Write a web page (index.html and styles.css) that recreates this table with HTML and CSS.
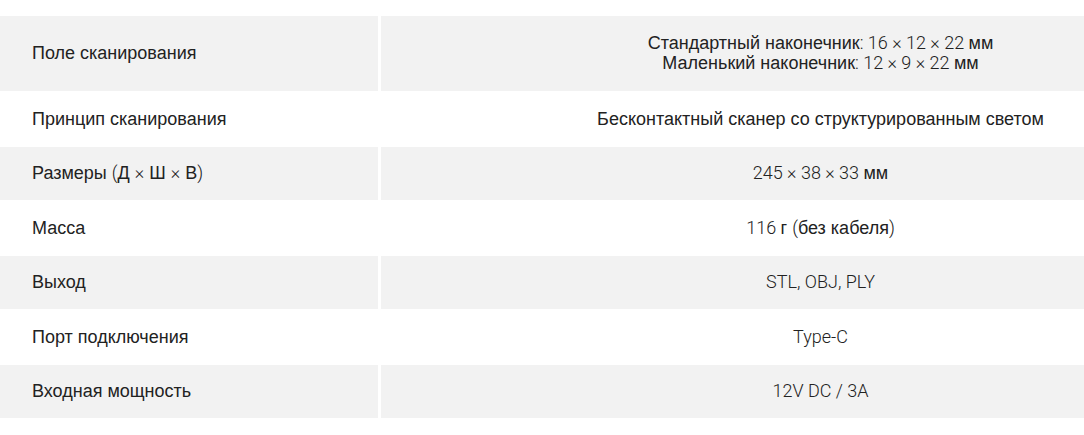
FILE: index.html
```html
<!DOCTYPE html>
<html lang="ru">
<head>
<meta charset="utf-8">
<link rel="stylesheet" href="styles.css">
</head>
<body>
<div class="wrap">
<table class="specs">
  <tr class="odd first">
    <td class="name">Поле сканирования</td>
    <td class="val">Стандартный наконечник<span class="l">: 16 × 12 × 22 </span>мм<br>Маленький наконечник<span class="l">: 12 × 9 × 22 </span>мм</td>
  </tr>
  <tr>
    <td class="name">Принцип сканирования</td>
    <td class="val">Бесконтактный сканер со структурированным светом</td>
  </tr>
  <tr class="odd">
    <td class="name">Размеры <span class="l">(</span>Д <span class="l">×</span> Ш <span class="l">×</span> В<span class="l">)</span></td>
    <td class="val"><span class="l">245 × 38 × 33 </span>мм</td>
  </tr>
  <tr>
    <td class="name">Масса</td>
    <td class="val"><span class="l">116 </span>г <span class="l">(</span>без кабеля<span class="l">)</span></td>
  </tr>
  <tr class="odd">
    <td class="name">Выход</td>
    <td class="val"><span class="l">STL, OBJ, PLY</span></td>
  </tr>
  <tr>
    <td class="name">Порт подключения</td>
    <td class="val"><span class="l">Type-C</span></td>
  </tr>
  <tr class="odd">
    <td class="name">Входная мощность</td>
    <td class="val"><span class="l">12V DC / 3A</span></td>
  </tr>
</table>
</div>
</body>
</html>
```
FILE: styles.css
```css
html, body {
  margin: 0;
  padding: 0;
  background: #fff;
}
body {
  font-family: "Liberation Sans", Arial, sans-serif;
  font-size: 18px;
  color: #222;
}
.wrap {
  width: 1084px;
  overflow: hidden;
  padding-top: 16px;
}
.specs {
  width: 1260px;
  border-collapse: separate;
  border-spacing: 0;
}
.specs td {
  padding: 16.25px 0;
  line-height: 20px;
  border-bottom: 2px solid #fff;
  vertical-align: middle;
}
.specs tr.first td {
  padding-top: 17.25px;
  padding-bottom: 17.25px;
}
.specs tr.odd td {
  background: #f2f2f2;
}
.specs td.name {
  width: 346px;
  padding-left: 32px;
  text-align: left;
}
.specs td.val {
  border-left: 3px solid #fff;
  text-align: center;
}
.l {
  font-family: Roboto, "Liberation Sans", sans-serif;
  font-weight: 300;
}
```
